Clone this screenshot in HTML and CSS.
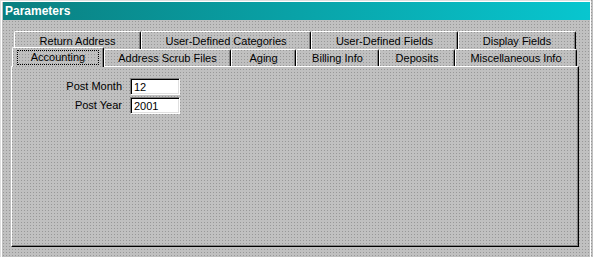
FILE: index.html
```html
<!DOCTYPE html>
<html lang="en">
<head>
    <meta charset="UTF-8">
    <title>Parameters</title>
    <link rel="stylesheet" href="styles.css">
</head>
<body>
    <div class="window">
        <div class="titlebar">Parameters</div>
        <div class="dialog">
            <div class="tab-row back">
                <div class="tab w-return">Return Address</div>
                <div class="tab w-categories">User-Defined Categories</div>
                <div class="tab w-fields">User-Defined Fields</div>
                <div class="tab w-display">Display Fields</div>
            </div>
            <div class="tab-row front">
                <div class="tab selected w-accounting"><span class="focus">Accounting</span></div>
                <div class="tab w-scrub">Address Scrub Files</div>
                <div class="tab w-aging">Aging</div>
                <div class="tab w-billing">Billing Info</div>
                <div class="tab w-deposits">Deposits</div>
                <div class="tab w-misc">Miscellaneous Info</div>
            </div>
            <div class="panel">
                <div class="form-grid">
                    <label for="postMonth">Post Month</label>
                    <input id="postMonth" type="text" value="12">
                    <label for="postYear">Post Year</label>
                    <input id="postYear" type="text" value="2001">
                </div>
            </div>
        </div>
    </div>
</body>
</html>
```

FILE: styles.css
```css
* {
    box-sizing: border-box;
    margin: 0;
    padding: 0;
}
body {
    width: 593px;
    height: 257px;
    overflow: hidden;
    background-color: #c0c0c0;
    background-image: conic-gradient(from 270deg at 1px 1px, #989898 90deg, transparent 0);
    background-size: 3px 3px;
    font-family: "Liberation Sans", Arial, sans-serif;
    font-size: 11px;
    color: #000;
}
.window {
    width: 591px;
    height: 257px;
    border-top: 1px solid #dfdfdf;
    border-left: 1px solid #dfdfdf;
    border-right: 1px solid #fff;
    box-shadow: inset 1px 1px #fff;
    padding: 1px 0 0 2px;
}
.titlebar {
    height: 18px;
    line-height: 18px;
    padding-left: 2px;
    background: linear-gradient(90deg, #0a7f80, #08c6cf);
    color: #fff;
    font-weight: bold;
    font-size: 12px;
}
.dialog {
    padding: 11px 0 0 8px;
}
.tab-row {
    display: flex;
    align-items: flex-end;
}
.tab-row.back {
    height: 18px;
    padding-left: 3px;
}
.tab-row.front {
    height: 17px;
    padding-left: 1px;
}
.tab {
    height: 100%;
    display: flex;
    justify-content: center;
    align-items: center;
    border: 1px solid #fff;
    border-right-color: #000;
    border-bottom: none;
    border-radius: 2px 2px 0 0;
    box-shadow: inset -1px 0 #808080;
    background-color: #c0c0c0;
    background-image: conic-gradient(from 270deg at 1px 1px, #989898 90deg, transparent 0);
    background-size: 3px 3px;
    white-space: nowrap;
}
.tab.selected {
    height: 20px;
    margin-bottom: -1px;
    position: relative;
    z-index: 1;
    padding-bottom: 1px;
}
.focus {
    border: 1px dotted #000;
    padding: 0 13px;
    line-height: 13px;
}
.w-return { width: 127px; }
.w-categories { width: 170px; }
.w-fields { width: 147px; }
.w-display { width: 118px; }
.w-accounting { width: 92px; }
.w-scrub { width: 127px; }
.w-aging { width: 65px; }
.w-billing { width: 83px; }
.w-deposits { width: 76px; }
.w-misc { width: 122px; }

.panel {
    width: 568px;
    height: 181px;
    border: 1px solid #fff;
    border-right-color: #000;
    border-bottom-color: #000;
    box-shadow: inset -1px -1px #808080;
    padding-top: 11px;
}
.form-grid {
    display: grid;
    grid-template-columns: 110px 50px;
    grid-auto-rows: 17px;
    column-gap: 8px;
    row-gap: 2px;
}
.form-grid label {
    text-align: right;
    line-height: 17px;
}
.form-grid input {
    width: 50px;
    height: 17px;
    border: 1px solid #808080;
    border-right-color: #fff;
    border-bottom-color: #fff;
    box-shadow: inset 1px 1px #000, inset -1px -1px #dfdfdf;
    background: #fff;
    font-family: "Liberation Sans", Arial, sans-serif;
    font-size: 11px;
    padding: 1px 3px 0;
    outline: none;
}
```
